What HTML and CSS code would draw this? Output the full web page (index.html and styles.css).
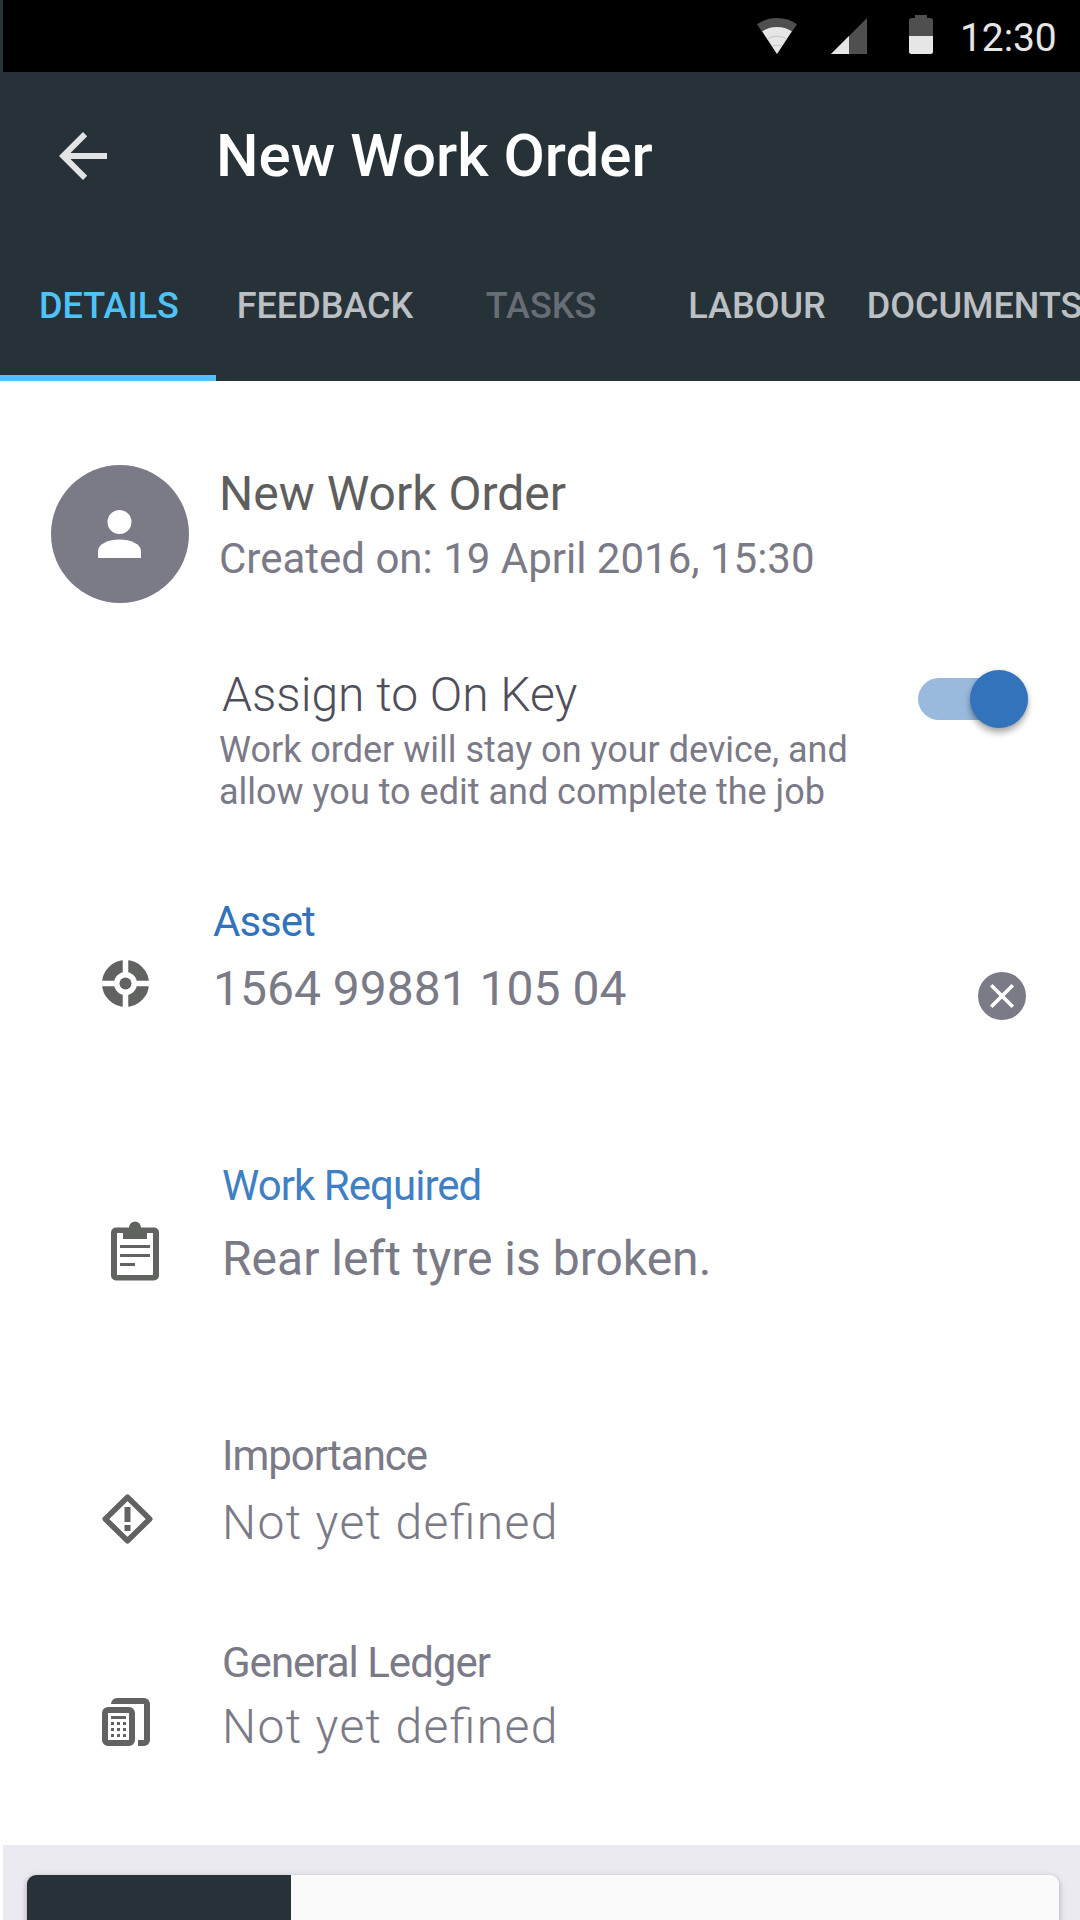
FILE: index.html
```html
<!DOCTYPE html>
<html lang="en">
<head>
<meta charset="utf-8">
<title>New Work Order</title>
<link rel="stylesheet" href="styles.css">
</head>
<body>
<div class="screen">
  <div class="status-bar">
    <svg class="wifi" width="40" height="36" viewBox="0 0 40 36">
      <path fill="#4f4f4f" d="M20 36 0 6.2C5.800 2.200 12.500 0 20 0s14.200 2.200 20 6.200z"/>
      <path fill="#e6e6e6" d="M20 36 5.200 13.200C9.600 10.500 14.500 9 20 9s10.400 1.500 14.800 4.200z"/>
      <path fill="none" stroke="#bdbdbd" stroke-width=".8" d="M10.500 21c2.500-1.600 5.500-2.700 9.500-2.700s7 1.100 9.500 2.700M15.500 28c2.800-1 6.200-1 9 0"/>
    </svg>
    <svg class="signal" width="36" height="36" viewBox="0 0 36 36">
      <path fill="#4f4f4f" d="M36 0v36H0z"/>
      <path fill="#e6e6e6" d="M18 18v18H0z"/>
    </svg>
    <svg class="battery" width="24" height="39" viewBox="0 0 24 39">
      <path fill="#4f4f4f" d="M6 0h12v3h3.500A2.500 2.500 0 0 1 24 5.500V21H0V5.500A2.500 2.500 0 0 1 2.500 3H6z"/>
      <path fill="#e6e6e6" d="M0 21h24v15.500a2.500 2.500 0 0 1-2.500 2.500h-19A2.500 2.500 0 0 1 0 36.500z"/>
    </svg>
    <span class="clock">12:30</span>
  </div>

  <header class="app-bar">
    <svg class="back" width="48" height="48" viewBox="0 0 48 48">
      <path fill="#e1e3e4" d="M48 21H11.500l16.700-16.800L24 0 0 24l24 24 4.200-4.200L11.500 27H48z"/>
    </svg>
    <h1 class="title">New Work Order</h1>
  </header>

  <nav class="tabs">
    <span class="tab tab-active">DETAILS</span>
    <span class="tab">FEEDBACK</span>
    <span class="tab tab-disabled">TASKS</span>
    <span class="tab">LABOUR</span>
    <span class="tab tab-last">DOCUMENTS</span>
  </nav>

  <main class="content">
    <section class="profile">
      <div class="avatar">
        <svg width="43" height="48" viewBox="0 0 43 48">
          <circle cx="21.500" cy="12" r="12" fill="#fff"/>
          <path fill="#fff" d="M0 48V41c0-7 10.500-11.500 21.500-11.500S43 34 43 41v7z"/>
        </svg>
      </div>
      <div class="profile-text">
        <h2 class="profile-name">New Work Order</h2>
        <p class="profile-date">Created on: 19 April 2016, 15:30</p>
      </div>
    </section>

    <section class="assign">
      <div class="assign-text">
        <h2 class="assign-title">Assign to On Key</h2>
        <p class="assign-note">Work order will stay on your device, and<br>allow you to edit and complete the job</p>
      </div>
      <div class="toggle"><span class="knob"></span></div>
    </section>

    <section class="field asset">
      <svg class="icon" width="47" height="47" viewBox="0 0 47 47">
        <circle cx="23.500" cy="23.500" r="17.500" fill="none" stroke="#616361" stroke-width="12"/>
        <path stroke="#fff" stroke-width="5.500" d="M23.500 0v13M23.500 34v13M0 23.500h13M34 23.500h13"/>
        <circle cx="23.500" cy="23.500" r="6" fill="#616361"/>
      </svg>
      <div class="field-text">
        <p class="label label-asset">Asset</p>
        <p class="value">1564 99881 105 04</p>
      </div>
      <svg class="clear" width="48" height="48" viewBox="0 0 48 48">
        <circle cx="24" cy="24" r="24" fill="#7b7a87"/>
        <path stroke="#fff" stroke-width="3.600" d="m13.200 13.200 21.600 21.600m0-21.600L13.200 34.800"/>
      </svg>
    </section>

    <section class="field work">
      <svg class="icon" width="48" height="60" viewBox="0 0 48 60">
        <path fill="#616361" fill-rule="evenodd" d="M5 6.500h13a6 6 0 0 1 12 0h13a5 5 0 0 1 5 5V54.500a5 5 0 0 1-5 5H5a5 5 0 0 1-5-5V11.500a5 5 0 0 1 5-5zM6 12v42h36V12h-6v6H12v-6z"/>
        <path stroke="#616361" stroke-width="2.800" d="M9 25.500h30M9 34.500h30M9 43.500h15"/>
      </svg>
      <div class="field-text">
        <p class="label label-work">Work Required</p>
        <p class="value">Rear left tyre is broken.</p>
      </div>
    </section>

    <section class="field importance">
      <svg class="icon" width="51" height="50" viewBox="0 0 51 50">
        <path fill="none" stroke="#616361" stroke-width="5.600" stroke-linejoin="round" d="M25.500 3.200 47.700 25 25.500 46.800 3.300 25z"/>
        <path fill="#616361" d="M22.500 13h6v15h-6zM22.500 31h6v6h-6z"/>
      </svg>
      <div class="field-text">
        <p class="label">Importance</p>
        <p class="value value-empty">Not yet defined</p>
      </div>
    </section>

    <section class="field ledger">
      <svg class="icon" width="48" height="48" viewBox="0 0 48 48">
        <path fill="#616361" d="M9 6a6 6 0 0 1 6-6h27a6 6 0 0 1 6 6v36a6 6 0 0 1-6 6h-6v-6h6V6z"/>
        <rect x="3" y="12" width="27" height="33" rx="3" fill="#fff" stroke="#616361" stroke-width="6"/>
        <path stroke="#616361" stroke-width="3" d="M9 19.500h15"/>
        <path stroke="#616361" stroke-width="3" stroke-dasharray="3" d="M9 25.500h15M9 31.500h15M9 37.500h15"/>
      </svg>
      <div class="field-text">
        <p class="label">General Ledger</p>
        <p class="value value-empty">Not yet defined</p>
      </div>
    </section>
  </main>

  <footer class="sheet">
    <div class="card"><div class="card-side"></div></div>
  </footer>
</div>
</body>
</html>
```
FILE: styles.css
```css
* {
  box-sizing: border-box;
  margin: 0;
  padding: 0;
}

body {
  font-family: Roboto, sans-serif;
  background: #fff;
}

.screen {
  display: flex;
  flex-direction: column;
  width: 1080px;
  height: 1920px;
  overflow: hidden;
}

svg {
  display: block;
  flex: none;
}

h1,
h2,
p {
  font-weight: 400;
  white-space: nowrap;
}

/* Status bar */
.status-bar {
  display: flex;
  align-items: flex-start;
  flex: none;
  height: 72px;
  padding: 15px 0 0 754px;
  border-left: 3px solid #273238;
  background: #000;
}

.wifi {
  margin-top: 3px;
}

.signal {
  margin: 3px 0 0 34px;
}

.battery {
  margin-left: 42px;
}

.clock {
  margin-left: 27px;
  color: #e6e6e6;
  font-size: 39px;
  line-height: 46px;
  letter-spacing: -0.1px;
}

/* App bar and tabs */
.app-bar {
  display: flex;
  align-items: center;
  flex: none;
  height: 158px;
  padding: 10px 0 0 59px;
  background: #273238;
}

.title {
  margin-left: 109px;
  color: #fff;
  font-size: 60px;
  font-weight: 500;
  line-height: 72px;
}

.tabs {
  display: grid;
  grid-template-columns: repeat(5, 216px);
  flex: none;
  height: 151px;
  background: #273238;
}

.tab {
  display: flex;
  justify-content: center;
  padding: 55px 0 0 2px;
  color: #bcc0c4;
  font-size: 36px;
  font-weight: 500;
  line-height: 42px;
  white-space: nowrap;
}

.tab-active {
  border-bottom: 6px solid #4fc3f7;
  color: #4fc3f7;
}

.tab-disabled {
  color: #676d75;
}

.tab-last {
  padding-left: 5px;
}

/* Work order details */
.content {
  flex: none;
  height: 1464px;
  padding-top: 84px;
}

.profile {
  display: flex;
  height: 202px;
  padding-left: 51px;
}

.avatar {
  display: flex;
  align-items: center;
  justify-content: center;
  width: 138px;
  height: 138px;
  padding-right: 1px;
  border-radius: 50%;
  background: #7b7a87;
}

.profile-text {
  padding: 1px 0 0 30px;
}

.profile-name {
  color: #5e5e5e;
  font-size: 48px;
  line-height: 56px;
}

.profile-date {
  margin-top: 13px;
  color: #7b7a87;
  font-size: 42px;
  line-height: 48px;
}

.assign {
  display: flex;
  justify-content: space-between;
  height: 231px;
  padding: 0 52px 0 219px;
}

.assign-title {
  padding-left: 3px;
  color: #4f4e5b;
  font-size: 48px;
  font-weight: 300;
  line-height: 56px;
}

.assign-note {
  margin-top: 6px;
  color: #7b7a87;
  font-size: 36px;
  line-height: 42px;
}

.toggle {
  display: flex;
  align-items: center;
  justify-content: flex-end;
  width: 110px;
  height: 42px;
  margin-top: 11px;
  border-radius: 21px;
  background: #99b9dd;
}

.knob {
  flex: none;
  width: 58px;
  height: 58px;
  border-radius: 50%;
  background: #3373bb;
  box-shadow: 0 5px 6px rgba(0, 0, 0, 0.3), 0 0 4px rgba(0, 0, 0, 0.12);
}

.field {
  display: flex;
  align-items: flex-start;
}

.field-text {
  flex: 1;
}

.label {
  color: #7b7a87;
  font-size: 42px;
  line-height: 48px;
  letter-spacing: -1px;
}

.label-asset {
  color: #3373bb;
}

.label-work {
  color: #3f7fc4;
  letter-spacing: -0.950px;
}

.value {
  margin-top: 15px;
  color: #7b7a87;
  font-size: 48px;
  line-height: 56px;
}

.value-empty {
  font-weight: 300;
  letter-spacing: 1.350px;
  font-feature-settings: "liga";
}

.asset {
  height: 264px;
  padding: 0 54px 0 102px;
}

.asset .icon {
  margin: 62px 64px 0 0;
}

.clear {
  margin-top: 74px;
}

.work {
  height: 270px;
  padding-left: 111px;
}

.work .icon {
  margin: 59px 63px 0 0;
}

.work .value {
  margin-top: 21px;
}

.importance {
  height: 207px;
  padding-left: 102px;
}

.importance .icon {
  margin: 62px 69px 0 0;
}

.ledger {
  padding-left: 102px;
}

.ledger .icon {
  margin: 59px 72px 0 0;
}

.ledger .value {
  margin-top: 12px;
}

/* Sheet peeking in at the bottom */
.sheet {
  flex: none;
  height: 75px;
  margin-left: 3px;
  padding: 30px 21px 0 24px;
  background: #ebeaf0;
}

.card {
  height: 90px;
  overflow: hidden;
  border-radius: 9px;
  background: #fafafa;
  box-shadow: 0 2px 6px rgba(0, 0, 0, 0.3);
}

.card-side {
  width: 264px;
  height: 100%;
  background: #273238;
}
```
